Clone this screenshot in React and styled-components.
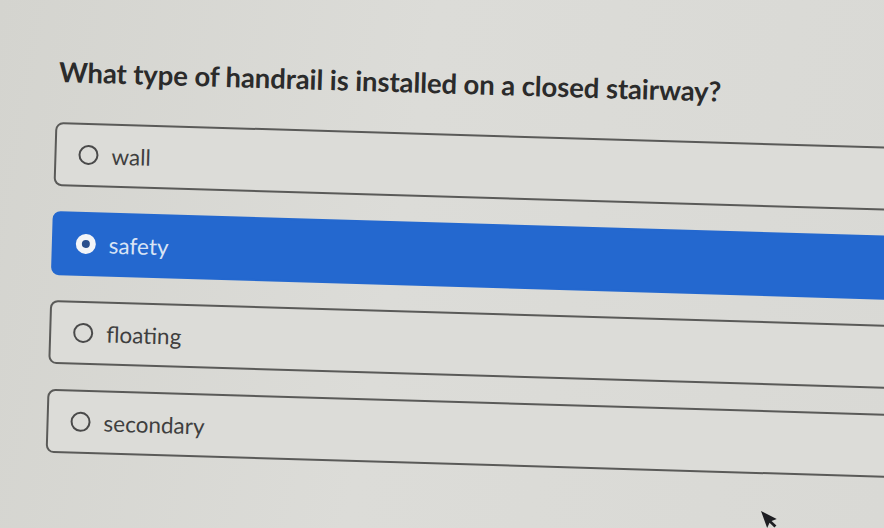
import styled, { createGlobalStyle } from 'styled-components';
import { useState } from 'react';

const GlobalStyle = createGlobalStyle`
  html, body {
    margin: 0;
    padding: 0;
    background: #d8d8d4;
    overflow: hidden;
  }
  body {
    font-family: Lato, "Noto Sans", "Liberation Sans", sans-serif;
  }
`;

const options = ['wall', 'safety', 'floating', 'secondary'];

const App = () => {
  const [selected, setSelected] = useState('safety');

  return (
    <Page>
      <GlobalStyle />
      <Quiz>
        <Question>What type of handrail is installed on a closed stairway?</Question>
        <Choices>
          {options.map(option => (
            <Choice
              key={option}
              $active={selected === option}
              onClick={() => setSelected(option)}
            >
              <Radio $active={selected === option} />
              <ChoiceLabel $active={selected === option}>{option}</ChoiceLabel>
            </Choice>
          ))}
        </Choices>
      </Quiz>
      {/* mouse pointer resting near the bottom edge */}
      <Pointer width="16" height="22" viewBox="0 0 16 22">
        <path d="M1 1 L1 19 L5 15 L8 21 L10.5 20 L7.5 14 L13 14 Z" fill="#1e1e22" />
      </Pointer>
    </Page>
  );
};

const Page = styled.div`
  position: relative;
  width: 884px;
  height: 528px;
  background: linear-gradient(100deg, #d4d4cf 0%, #dcdcd8 45%, #d9d9d5 100%);
  overflow: hidden;
`;

const Quiz = styled.div`
  display: flex;
  flex-direction: column;
  padding: 54px 0 0 57px;
  width: 900px;
  transform: rotate(1.7deg);
  transform-origin: 57px 70px;
`;

const Question = styled.h1`
  margin: 0 0 32px 2px;
  font-size: 27.5px;
  font-weight: 700;
  color: #2b2b2b;
  line-height: 36px;
  letter-spacing: -0.1px;
`;

const Choices = styled.div`
  display: flex;
  flex-direction: column;
  gap: 25px;
`;

const Choice = styled.div`
  display: flex;
  align-items: center;
  gap: 13px;
  height: 64px;
  padding-left: 22px;
  box-sizing: border-box;
  border-radius: 8px;
  border: 2px solid ${props => (props.$active ? '#2468cf' : '#5a5a58')};
  background: ${props => (props.$active ? '#2468cf' : '#dcdcd8')};
  cursor: pointer;
`;

const Radio = styled.span`
  width: 20px;
  height: 20px;
  box-sizing: border-box;
  border-radius: 50%;
  border: ${props => (props.$active ? '6px solid #f2f4f8' : '2px solid #4a4a4a')};
  background: ${props => (props.$active ? '#2a4f8c' : 'transparent')};
  flex-shrink: 0;
`;

const ChoiceLabel = styled.span`
  font-size: 22.5px;
  color: ${props => (props.$active ? '#d9e4f5' : '#3f3f3f')};
`;

const Pointer = styled.svg`
  position: absolute;
  left: 763px;
  top: 507px;
  transform: rotate(-20deg);
`;

export default App;
